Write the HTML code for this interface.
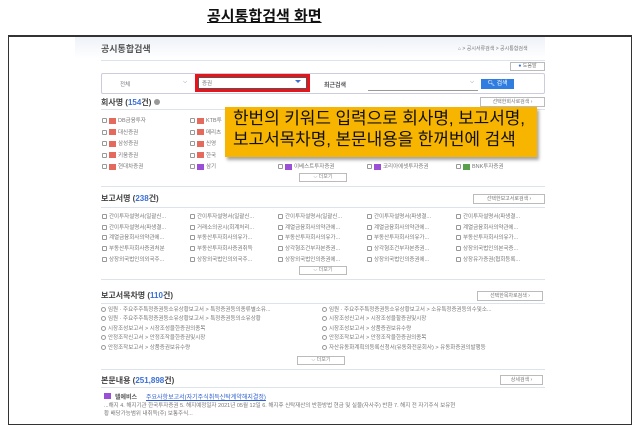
<!DOCTYPE html>
<html><head><meta charset="utf-8"><style>
*{margin:0;padding:0;box-sizing:border-box}
body{width:639px;height:420px;background:#fff;position:relative;overflow:hidden;font-family:"Liberation Sans","Noto Sans CJK KR",sans-serif;color:#555}
.a{position:absolute;white-space:nowrap}
.t{font-size:5.5px;color:#777}
.h{font-size:8px;font-weight:bold;color:#444}
.h b{color:#3b6fd6}
.ln{position:absolute;left:101px;width:444px;height:1px;background:#dde3ea}
.btn{position:absolute;border:1px solid #bbb;background:#fff;font-size:5px;color:#777;text-align:center;line-height:8px}
.cb{display:inline-block;width:5px;height:5px;border:1px solid #999;border-radius:1px;vertical-align:middle;margin-right:2px}
.rd{display:inline-block;width:5px;height:5px;border:1px solid #999;border-radius:50%;vertical-align:middle;margin-right:2px}
.ic{display:inline-block;width:7px;height:6px;background:#e36a5c;vertical-align:middle;margin-right:2px}
.more{position:absolute;width:48px;height:9px;border:1px solid #bbb;font-size:5px;color:#888;text-align:center;line-height:7px}
</style></head><body>
<div class="a" style="left:207px;top:5px;font-size:15px;font-weight:bold;color:#111;text-decoration:underline;letter-spacing:0">공시통합검색 화면</div>
<div class="a" style="left:8px;top:35px;width:624px;height:390px;border:1px solid #333;border-top:2px solid #333"></div>
<div class="a" style="left:75px;top:37px;width:470px;height:22px;background:linear-gradient(#eef2f8,#fff)"></div>
<div class="a" style="left:101px;top:42px;font-size:9px;font-weight:bold;color:#555">공시통합검색</div>
<div class="a t" style="left:458px;top:45px;font-size:5px">⌂ &gt; 공시서류검색 &gt; 공시통합검색</div>
<div class="ln" style="top:60px"></div>
<div class="btn" style="left:510px;top:62px;width:35px;height:9px;line-height:7px"><span style="color:#3b6fd6">●</span> 도움말</div>
<div class="a" style="left:101px;top:73px;width:444px;height:21px;border:1px solid #ccd;border-radius:2px"></div>
<div class="a t" style="left:120px;top:80px">전체</div>
<div class="a t" style="left:183px;top:79px">⌵</div>
<div class="a" style="left:195px;top:74px;width:115px;height:18px;border:3px solid #e8141c"></div>
<div class="a" style="left:198px;top:77px;width:109px;height:12px;border:1px solid #555;background:#fff"></div>
<div class="a t" style="left:202px;top:79px">증권</div>
<div class="a" style="left:295px;top:80px;width:0;height:0;border-left:3px solid transparent;border-right:3px solid transparent;border-top:3px solid #3b6fd6"></div>
<div class="a" style="left:324px;top:80px;font-size:6px;color:#555;font-weight:bold">최근검색</div>
<div class="a" style="left:368px;top:90px;width:110px;height:1px;background:#999"></div>
<div class="a t" style="left:470px;top:79px">⌵</div>
<div class="a" style="left:481px;top:79px;width:33px;height:10px;background:#2f7de0;color:#fff;font-size:6px;text-align:center;line-height:10px">🔍︎ 검색</div>

<div class="a h" style="left:101px;top:97px">회사명 (<b>154</b>건) <span style="display:inline-block;width:6px;height:6px;border-radius:50%;background:#999"></span></div>
<div class="btn" style="left:480px;top:97px;width:65px;height:10px">선택한회사로검색 ›</div>
<div class="ln" style="top:109px"></div>
<div class="a t" style="left:102px;top:116px;line-height:11.5px">
<span class="cb"></span><span class="ic"></span>DB금융투자<br><span class="cb"></span><span class="ic"></span>대신증권<br><span class="cb"></span><span class="ic"></span>삼성증권<br><span class="cb"></span><span class="ic"></span>키움증권<br><span class="cb"></span><span class="ic"></span>현대차증권</div>
<div class="a t" style="left:190px;top:116px;line-height:11.5px">
<span class="cb"></span><span class="ic"></span>KTB투<br><span class="cb"></span><span class="ic"></span>메리츠<br><span class="cb"></span><span class="ic"></span>신영<br><span class="cb"></span><span class="ic"></span>한국<br><span class="cb"></span><span class="ic" style="background:#9b4fd6"></span>삼기</div>
<div class="a t" style="left:278px;top:162px"><span class="cb"></span><span class="ic" style="background:#9b4fd6"></span>이베스트투자증권</div>
<div class="a t" style="left:367px;top:162px"><span class="cb"></span><span class="ic" style="background:#9b4fd6"></span>코리아에셋투자증권</div>
<div class="a t" style="left:456px;top:162px"><span class="cb"></span><span class="ic" style="background:#5aa04a"></span>BNK투자증권</div>
<div class="more" style="left:299px;top:173px">⌵ 더보기</div>
<div class="a" style="left:225px;top:107px;width:312px;height:50px;background:#f7b500;box-shadow:2px 3px 3px rgba(0,0,0,.35)"></div>
<div class="a" style="left:233px;top:108px;font-size:17px;line-height:21px;color:#111;letter-spacing:-0.1px">한번의 키워드 입력으로 회사명, 보고서명,<br>보고서목차명, 본문내용을 한꺼번에 검색</div>
<div class="ln" style="top:186px"></div>

<div class="a h" style="left:101px;top:193px">보고서명 (<b>238</b>건)</div>
<div class="btn" style="left:473px;top:194px;width:72px;height:10px">선택한보고서로검색 ›</div>
<div class="ln" style="top:207px"></div>
<div class="a t" style="left:102px;top:212px;line-height:10.7px"><span class="cb"></span>간이투자설명서(일괄신...<br><span class="cb"></span>간이투자설명서(파생결...<br><span class="cb"></span>계열금융회사의약관에...<br><span class="cb"></span>부동산투자회사증권처분<br><span class="cb"></span>상장외국법인의외국주...</div>
<div class="a t" style="left:190px;top:212px;line-height:10.7px"><span class="cb"></span>간이투자설명서(일괄신...<br><span class="cb"></span>거래소의공시(회계처리...<br><span class="cb"></span>부동산투자회사의유가...<br><span class="cb"></span>부동산투자회사증권취득<br><span class="cb"></span>상장외국법인의외국주...</div>
<div class="a t" style="left:278px;top:212px;line-height:10.7px"><span class="cb"></span>간이투자설명서(일괄신...<br><span class="cb"></span>계열금융회사의약관에...<br><span class="cb"></span>부동산투자회사의유가...<br><span class="cb"></span>상각형조건부자본증권...<br><span class="cb"></span>상장외국법인의증권에...</div>
<div class="a t" style="left:367px;top:212px;line-height:10.7px"><span class="cb"></span>간이투자설명서(파생결...<br><span class="cb"></span>계열금융회사의약관에...<br><span class="cb"></span>부동산투자회사의유가...<br><span class="cb"></span>상각형조건부자본증권...<br><span class="cb"></span>상장외국법인의증권에...</div>
<div class="a t" style="left:456px;top:212px;line-height:10.7px"><span class="cb"></span>간이투자설명서(파생결...<br><span class="cb"></span>계열금융회사의약관에...<br><span class="cb"></span>부동산투자회사의유가...<br><span class="cb"></span>상장외국법인의본국증...<br><span class="cb"></span>상장유가증권(협회등록...</div>
<div class="more" style="left:299px;top:266px">⌵ 더보기</div>
<div class="ln" style="top:279px"></div>

<div class="a h" style="left:101px;top:290px">보고서목차명 (<b>110</b>건)</div>
<div class="btn" style="left:477px;top:291px;width:66px;height:10px">선택한목차로검색 ›</div>
<div class="ln" style="top:303px"></div>
<div class="a t" style="left:101px;top:306px;line-height:9.4px"><span class="rd"></span>임원 · 주요주주특정증권등소유상황보고서 &gt; 특정증권등의종류별소유...<br><span class="rd"></span>임원 · 주요주주특정증권등소유상황보고서 &gt; 특정증권등의소유상황<br><span class="rd"></span>시장조성보고서 &gt; 시장조성을한증권의종목<br><span class="rd"></span>안정조작신고서 &gt; 안정조작을한증권및시장<br><span class="rd"></span>안정조작보고서 &gt; 상품증권보유수량</div>
<div class="a t" style="left:322px;top:306px;line-height:9.4px"><span class="rd"></span>임원 · 주요주주특정증권등소유상황보고서 &gt; 소유특정증권등의수및소...<br><span class="rd"></span>시장조성신고서 &gt; 시장조성을할증권및시장<br><span class="rd"></span>시장조성보고서 &gt; 상품증권보유수량<br><span class="rd"></span>안정조작보고서 &gt; 안정조작을한증권의종목<br><span class="rd"></span>자산유동화계획의등록신청서(유동화전문회사) &gt; 유동화증권의발행등</div>
<div class="more" style="left:297px;top:356px">⌵ 더보기</div>
<div class="ln" style="top:369px"></div>

<div class="a h" style="left:101px;top:375px">본문내용 (<b>251,898</b>건)</div>
<div class="btn" style="left:500px;top:375px;width:43px;height:10px">상세검색 ›</div>
<div class="ln" style="top:387px"></div>
<div class="a" style="left:104px;top:393px;width:7px;height:6px;background:#9b4fd6"></div>
<div class="a" style="left:115px;top:392px;font-size:6px;color:#555;font-weight:bold">텔에비스</div>
<div class="a" style="left:146px;top:392px;font-size:6px;color:#2f5fd0;text-decoration:underline">주요사항보고서(자기주식취득신탁계약해지결정)</div>
<div class="a t" style="left:104px;top:402px;line-height:8px">...해지 4. 해지기관 한국투자증권 5. 해지예정일자 2021년 05월 12일 6. 해지후 신탁재산의 반환방법 현금 및 실물(자사주) 반환 7. 해지 전 자기주식 보유현<br>황 배당가능범위 내취득(주) 보통주식...</div>
</body></html>
